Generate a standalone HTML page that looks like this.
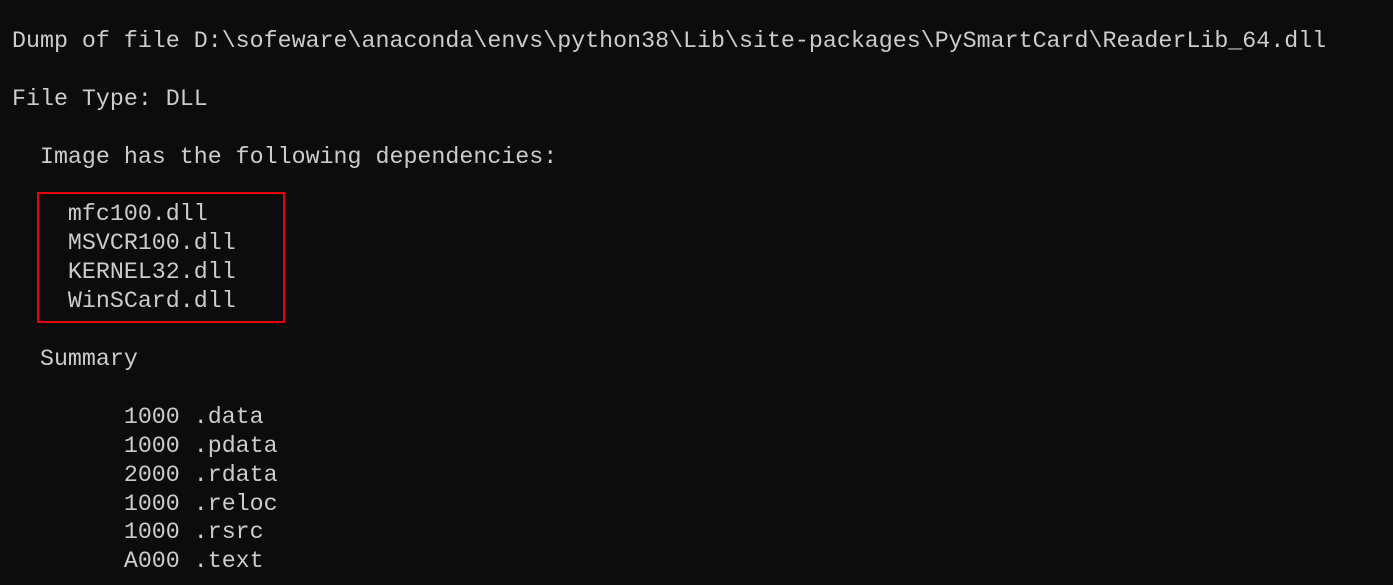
<!DOCTYPE html>
<html><head><meta charset="utf-8"><style>
html,body{margin:0;padding:0;background:#0c0c0c;width:1393px;height:585px;overflow:hidden}
pre{margin:0;position:absolute;left:12px;top:27px;font-family:"Liberation Mono",monospace;font-size:23.3px;line-height:28.9px;color:#cccccc;white-space:pre}
.box{position:absolute;left:37px;top:192px;width:244px;height:127px;border:2px solid #e8000b}
</style></head><body>
<pre>Dump of file D:\sofeware\anaconda\envs\python38\Lib\site-packages\PySmartCard\ReaderLib_64.dll

File Type: DLL

  Image has the following dependencies:

    mfc100.dll
    MSVCR100.dll
    KERNEL32.dll
    WinSCard.dll

  Summary

        1000 .data
        1000 .pdata
        2000 .rdata
        1000 .reloc
        1000 .rsrc
        A000 .text</pre>
<div class="box"></div>
</body></html>
